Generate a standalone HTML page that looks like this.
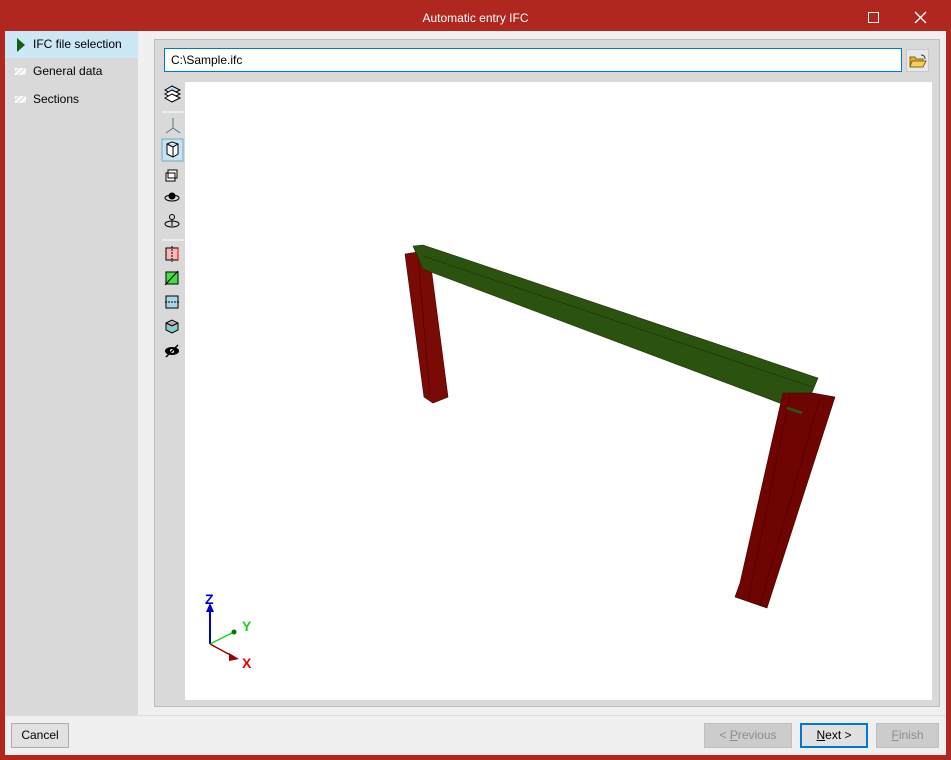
<!DOCTYPE html>
<html><head><style>
*{margin:0;padding:0;box-sizing:border-box}
body{width:951px;height:760px;background:#b0271f;font-family:"Liberation Sans",sans-serif;font-size:12px;color:#000;position:relative;overflow:hidden}
.abs{position:absolute}
.btn{position:absolute;height:25px;border:1px solid #adadad;background:#e1e1e1;text-align:center;line-height:23px;font-size:12px}
.side{position:absolute;left:0;width:133px;height:27px;line-height:27px;padding-left:28px}
.hatch{position:absolute;left:10px;top:10px;width:11px;height:7px;background:repeating-linear-gradient(135deg,#fff 0 2px,#e6e6e6 2px 4px)}
.tb{position:absolute;left:162px;width:22px;height:22px}
</style></head><body>
<div class="abs" style="left:0;top:0;width:951px;height:31px;color:#fff;text-align:center;line-height:36px;font-size:12px">Automatic entry IFC</div>
<div class="abs" style="left:868px;top:12px;width:11px;height:11px;border:1px solid #fff"></div>
<svg class="abs" style="left:914px;top:11px" width="13" height="13"><path d="M1 1L12 12M12 1L1 12" stroke="#fff" stroke-width="1.3"/></svg>
<div class="abs" style="left:5px;top:31px;width:941px;height:724px;background:#f0f0f0"></div>
<div class="abs" style="left:5px;top:31px;width:133px;height:684px;background:#d9d9d9">
 <div class="side" style="top:0;background:#cce8f6">IFC file selection<svg class="abs" style="left:12px;top:7px" width="8" height="14"><path d="M0 0L8 7L0 14Z" fill="#0f5f0f"/></svg></div>
 <div class="side" style="top:27px"><div class="hatch"></div>General data</div>
 <div class="side" style="top:55px"><div class="hatch"></div>Sections</div>
</div>
<div class="abs" style="left:154px;top:39px;width:786px;height:668px;background:#d9d9d9;border:1px solid #bdbdbd"></div>
<div class="abs" style="left:164px;top:48px;width:738px;height:24px;background:#fff;border:1px solid #0078d7;padding-left:6px;line-height:22px">C:\Sample.ifc</div>
<div class="abs" style="left:906px;top:49px;width:23px;height:23px;border:1px solid #c8c8c8;background:#e8e8e8"></div>
<svg class="abs" style="left:909px;top:53px" width="18" height="16"><path d="M1 4h5l1 2h7v8H1z" fill="#e0b030" stroke="#8a6410"/><path d="M3 8h14l-3 6H1z" fill="#f5d060" stroke="#8a6410"/><path d="M12 2q4 0 4 4" stroke="#333" fill="none"/></svg>
<div class="abs" style="left:185px;top:82px;width:747px;height:618px;background:#fff"></div>
<!-- toolbar -->
<svg class="abs" style="left:160px;top:82px" width="26" height="280">
<g fill="#bfe0ee" stroke="#000"><path d="M5 8l7-4 8 4-8 4z"/><path d="M5 12l7-4 8 4-8 4z" fill="#fff"/><path d="M5 16l7-4 8 4-8 4z" fill="#fff"/></g>
<line x1="2" y1="30" x2="24" y2="30" stroke="#fff"/>
<path d="M13 36v10M13 46l-7 5M13 46l7 5" stroke="#4a7a8a" fill="none"/>
<rect x="2" y="57" width="21" height="22" fill="#c5e3f3" stroke="#7ab"/>
<path d="M7 62l5-2 6 2v10l-5 3-6-3z M7 62l6 3 5-3 M13 65v10" fill="#fff" stroke="#000"/>
<path d="M8 88h9v8h-9z M6 91h9v8H6z" fill="#fff" stroke="#000"/>
<ellipse cx="12" cy="116" rx="7" ry="3" fill="none" stroke="#000"/><circle cx="12" cy="114" r="3.5"/>
<circle cx="12" cy="135" r="2.5" fill="none" stroke="#000"/><path d="M12 138v6" stroke="#000"/><ellipse cx="12" cy="142" rx="7" ry="3" fill="none" stroke="#000"/>
<line x1="2" y1="158" x2="24" y2="158" stroke="#fff"/>
<rect x="6" y="166" width="12" height="12" fill="#f8b8b8" stroke="#000"/><path d="M12 164v16" stroke="#000" stroke-dasharray="2 1"/><path d="M18 166v12" stroke="#e00"/>
<rect x="6" y="190" width="12" height="12" fill="#4d4" stroke="#000"/><path d="M5 203L18 189" stroke="#000"/>
<rect x="6" y="214" width="12" height="12" fill="#aad4ea" stroke="#000"/><path d="M5 220h14" stroke="#000" stroke-dasharray="2 1"/>
<path d="M6 241l6-3 6 3v7l-6 3-6-3z" fill="#8cc" stroke="#000"/><path d="M6 241l6 3 6-3" fill="#e88" stroke="#000"/>
<ellipse cx="12" cy="269" rx="7" ry="4" fill="#000"/><circle cx="12" cy="269" r="2" fill="#fff"/><path d="M6 275L18 263" stroke="#000" stroke-width="1.5"/>
</svg>
<!-- model -->
<svg class="abs" style="left:185px;top:82px" width="747" height="618">
<g transform="translate(-185,-82)">
<path d="M405 254L418 252L430 259L448 397L433 403L424 397Z" fill="#7a0a05" stroke="#4a0000" stroke-width=".6"/>
<path d="M418 256L430 398" stroke="#4a0000" stroke-width=".6"/>
<path d="M413 246L423 245L818 378L810 397L785 405L423 269Z" fill="#2b520e" stroke="#1a3008" stroke-width=".6"/>
<path d="M423 256L812 387" stroke="#1a3008" stroke-width=".6"/>
<path d="M783 393L813 393L835 397L767 608L735 597L740 583Z" fill="#6e0502" stroke="#4a0000" stroke-width=".6"/>
<path d="M790 395L748 600M820 398L760 605" stroke="#4a0000" stroke-width=".6"/>
<path d="M787 408L802 413" stroke="#2b520e" stroke-width="3"/>
</g>
<g transform="translate(-185,-82)">
<path d="M210 644V610" stroke="#00c" stroke-width="2"/><path d="M206 612l4-9 4 9z" fill="#00c"/>
<path d="M210 644L236 631" stroke="#2c2" stroke-width="1.5"/><circle cx="234" cy="632" r="2.5" fill="#070"/>
<path d="M210 644L234 657" stroke="#900" stroke-width="1.5"/><path d="M229 653l10 6-10 2z" fill="#900"/>
<text x="205" y="604" font-family="Liberation Sans" font-weight="bold" font-size="14" fill="#00c">Z</text>
<text x="242" y="631" font-family="Liberation Sans" font-weight="bold" font-size="14" fill="#2c2">Y</text>
<text x="242" y="668" font-family="Liberation Sans" font-weight="bold" font-size="14" fill="#e00">X</text>
</g>
</svg>
<div class="abs" style="left:5px;top:715px;width:941px;height:1px;background:#dcdcdc"></div>
<div class="btn" style="left:11px;top:723px;width:58px">Cancel</div>
<div class="btn" style="left:704px;top:723px;width:88px;color:#8d8d8d;background:#cccccc;border-color:#bfbfbf">&lt; <u>P</u>revious</div>
<div class="btn" style="left:800px;top:723px;width:68px;border:2px solid #0078d7;line-height:21px"><u>N</u>ext &gt;</div>
<div class="btn" style="left:876px;top:723px;width:63px;color:#8d8d8d;background:#cccccc;border-color:#bfbfbf"><u>F</u>inish</div>
</body></html>
